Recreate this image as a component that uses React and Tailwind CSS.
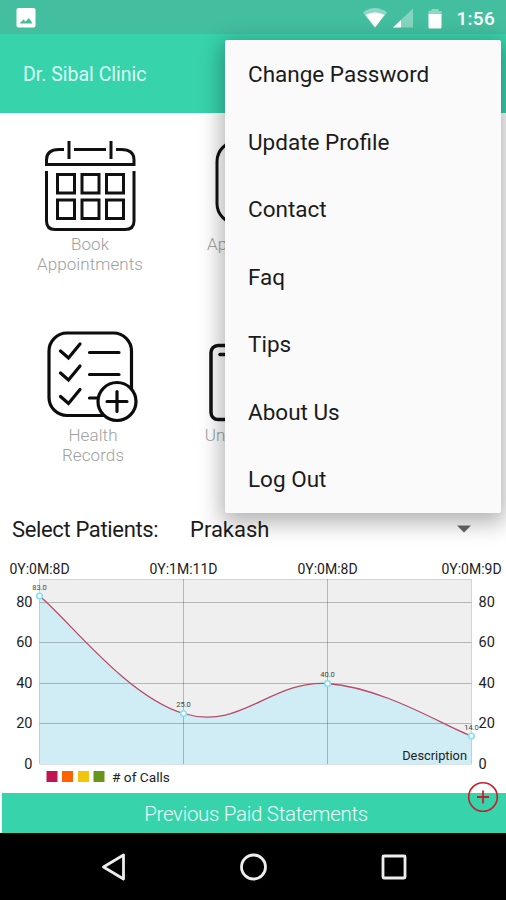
import React, { useState } from 'react';

const menuItems = ['Change Password', 'Update Profile', 'Contact', 'Faq', 'Tips', 'About Us', 'Log Out'];

const points = [
  { x: 39.5, y: 596, label: '83.0', date: '0Y:0M:8D' },
  { x: 183.5, y: 713.5, label: '25.0', date: '0Y:1M:11D' },
  { x: 327.5, y: 683.5, label: '40.0', date: '0Y:0M:8D' },
  { x: 471.5, y: 736, label: '14.0', date: '0Y:0M:9D' },
];

const ticks = [
  { value: 80, y: 602.5 },
  { value: 60, y: 642.5 },
  { value: 40, y: 683.5 },
  { value: 20, y: 723.5 },
  { value: 0, y: 764.5 },
];

const curve = 'M39.5 596C68.3 619.5 126 696 183.5 713.5C241 731 270 680 327.5 683.5C385 688 443 725.5 471.5 736';

function StatusBar() {
  return (
    <div className="flex h-[34px] items-center bg-[#43bf9f] pl-4 pr-[11px] text-white">
      <svg width="20" height="20" viewBox="0 0 20 20" className="mt-px">
        <rect x="0.5" y="0" width="19" height="19.5" rx="2" fill="white" />
        <path d="M3.5 15.5L7.5 11.5L9.5 13.5L13 10L16.5 15.5Z" fill="#43bf9f" />
      </svg>
      <svg width="82" height="22" viewBox="0 0 82 22" className="ml-auto mt-px">
        <path d="M0 5.5C7 -0.500 17 -0.500 24 5.5L12 20.5Z" fill="white" fillOpacity="0.4" />
        <path d="M2.5 8C8 4.5 16 4.5 21.5 8L12 20.5Z" fill="white" />
        <path d="M50 1.5V20.5H30Z" fill="white" fillOpacity="0.35" />
        <path d="M38 13V20.5H30Z" fill="white" />
        <path d="M68.500 2H75.500V4H78.500V9H65.500V4H68.500Z" fill="white" fillOpacity="0.4" />
        <path d="M65.500 7H78.500V20.500Q78.500 21.500 77.500 21.500H66.500Q65.500 21.500 65.500 20.500Z" fill="white" />
      </svg>
      <span className="mt-0.5 ml-[11px] text-[19px] font-medium leading-none tracking-[0.3px]">1:56</span>
    </div>
  );
}

function CalendarIcon() {
  return (
    <svg width="92" height="92" viewBox="0 0 92 92" fill="none" stroke="#111" strokeWidth="3">
      <path d="M25 1V19M67 1V19M30 9.500H62M20 9.500H15Q2.500 9.500 2.500 20V24.500H90V20Q90 9.500 77 9.500H72" />
      <path d="M2.500 31V81Q2.500 89.500 11 89.500H81Q90 89.500 90 81V31" />
      {[13.5, 38, 62.5].map((x) => (
        <g key={x}>
          <rect x={x} y="34.5" width="17" height="18.5" />
          <rect x={x} y="60" width="17" height="18.500" />
        </g>
      ))}
    </svg>
  );
}

function RecordsIcon() {
  return (
    <svg width="92" height="92" viewBox="0 0 92 92" fill="none" stroke="#0c0c0c" strokeWidth="3.200" strokeLinecap="round">
      <rect x="2" y="2" width="82.500" height="82.500" rx="18" />
      {[21.5, 43.5, 67].map((y) => (
        <path key={y} d={`M13.500 ${y - 1.5}L21.500 ${y + 5.5}L33 ${y - 8.5}M42.500 ${y}H72`} />
      ))}
      <circle cx="70" cy="70.500" r="19" fill="white" />
      <path d="M60 70.500H80M70 60.500V80.500" />
    </svg>
  );
}

function Tile({ icon, lines, className }) {
  return (
    <div className={`flex flex-col items-center text-[17px] font-light leading-[19.5px] tracking-[0.1px] text-[#a0a0a0] ${className}`}>
      <div className="mb-[3px]">{icon}</div>
      {lines.map((line) => (
        <span key={line}>{line}</span>
      ))}
    </div>
  );
}

function Chart() {
  return (
    <svg width="506" height="247" viewBox="0 546 506 247" fontFamily="Roboto, sans-serif" fill="#222">
      <rect x="39.500" y="579.500" width="432" height="185" fill="#efefef" />
      <path d={`${curve}V764.500H39.500Z`} fill="#d0edf5" />
      <g stroke="#000" strokeOpacity="0.24">
        {ticks.map((t) => <path key={t.value} d={`M39.500 ${t.y}H471.500`} strokeOpacity={t.value ? 0.24 : 0.05} />)}
        <path d="M183.500 579V764M327.500 579V764" />
        <path d="M39.500 764V579.500H471.500V764" fill="none" strokeOpacity="0.14" />
      </g>
      <path d={curve} fill="none" stroke="#b84a68" strokeWidth="1.300" />
      {ticks.map((t) => (
        <g key={t.value} fontSize="14.500">
          <text x="32.500" y={t.y + 4.5} textAnchor="end">{t.value}</text>
          <text x="478.500" y={t.y + 4.5}>{t.value}</text>
        </g>
      ))}
      {points.map((p) => (
        <g key={p.x} textAnchor="middle">
          <text x={p.x} y="573.500" fontSize="14">{p.date}</text>
          <text x={p.x} y={p.y - 6.5} fontSize="7.500" fill="#444">{p.label}</text>
          <circle cx={p.x} cy={p.y} r="2.800" fill="white" stroke="#7fe3f5" strokeWidth="1.600" />
        </g>
      ))}
      <text x="467" y="760" fontSize="12.800" textAnchor="end">Description</text>
      <rect x="46.500" y="771" width="11" height="11" fill="#c01550" />
      <rect x="62" y="771" width="11" height="11" fill="#ff6200" />
      <rect x="78" y="771" width="11" height="11" fill="#f2c50a" />
      <rect x="93.500" y="771" width="11" height="11" fill="#659619" />
      <text x="112" y="782" fontSize="13.700">{'# of Calls'}</text>
    </svg>
  );
}

function NavBar() {
  return (
    <div className="flex h-[67px] items-center justify-center bg-black">
      <svg width="310" height="34" viewBox="0 0 310 34" fill="none" stroke="#eee" strokeWidth="2.800" strokeLinejoin="round">
        <path d="M25.500 5V29L5.500 17Z" />
        <circle cx="155.500" cy="17" r="12" />
        <rect x="285" y="6" width="22" height="22" rx="1" />
      </svg>
    </div>
  );
}

function App() {
  const [menuOpen] = useState(true);

  return (
    <div className="relative flex h-[900px] w-[506px] flex-col overflow-hidden bg-white font-['Roboto',sans-serif]">
      <StatusBar />
      <header className="flex h-[79px] items-center bg-[#37d4ac] pl-[23px] pt-0.5 text-[19.5px] text-[#dcfff6]">
        Dr. Sibal Clinic
      </header>

      {/* Shortcuts */}
      <main className="h-[399px] pt-[27px]">
        <div className="flex h-[191px] pl-[30px]">
          <Tile className="w-[120px]" icon={<CalendarIcon />} lines={['Book', 'Appointments']} />
          <Tile
            className="ml-[50px] w-[120px]"
            icon={
              <svg width="92" height="92" viewBox="0 0 92 92" fill="none" stroke="#111" strokeWidth="3">
                <rect x="3" y="1.500" width="84" height="82" rx="20" />
              </svg>
            }
            lines={['Appointments']}
          />
        </div>
        <div className="flex pl-[33px]">
          <Tile className="w-[120px]" icon={<RecordsIcon />} lines={['Health', 'Records']} />
          <Tile
            className="ml-[41px] w-[120px]"
            icon={
              <svg width="92" height="92" viewBox="0 0 92 92" fill="none" stroke="#111" strokeWidth="3.500" strokeLinecap="round">
                <rect x="3" y="14.500" width="78" height="74" rx="7" />
                <path d="M12 23.500H72" />
              </svg>
            }
            lines={['Unpaid Visits']}
          />
        </div>
      </main>

      {/* Patient picker */}
      <div className="flex h-[34px] items-center pl-3 text-[22px] text-[#1c1c1c]">
        <span className="w-[178px] tracking-[-0.35px]">Select Patients:</span>
        <span>Prakash</span>
        <svg width="14" height="8" viewBox="0 0 14 8" className="ml-auto mr-[35px]">
          <path d="M0 0.500H14L7 7.500Z" fill="#666" />
        </svg>
      </div>

      <Chart />

      <button className="ml-[2px] h-10 bg-[#37d4ac] pt-0.5 pl-1 text-[20.5px] font-light tracking-[-0.3px] text-[#eafff9]">Previous Paid Statements</button>
      <NavBar />

      <svg width="32" height="32" viewBox="0 0 32 32" className="absolute left-[467px] top-[781px]" fill="none" stroke="#c4202b">
        <circle cx="16" cy="16" r="14.300" strokeWidth="1.600" />
        <path d="M10 16H22M16 9.500V22.500" strokeWidth="1.800" />
      </svg>

      {menuOpen && (
        <ul className="absolute left-[225px] top-10 w-[276px] rounded-[2px] bg-[#fafafa] pl-[23px] text-[22.5px] text-[#1b1b1b] shadow-[0_6px_22px_4px_rgba(0,0,0,0.3)]">
          {menuItems.map((item) => (
            <li key={item} className="flex h-[67.5px] items-center pt-[3px]">{item}</li>
          ))}
        </ul>
      )}
    </div>
  );
}

export default App;
